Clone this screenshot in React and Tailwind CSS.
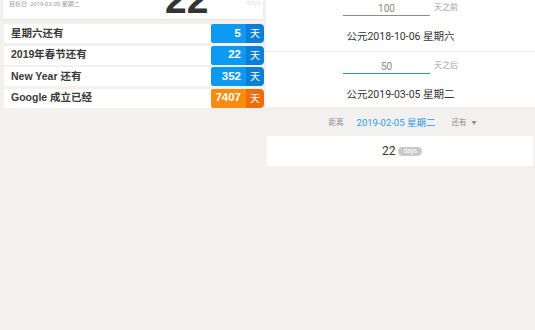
import React from "react";

const rows = [
  { label: "星期六还有", n: "5", orange: false },
  { label: "2019年春节还有", n: "22", orange: false },
  { label: "New Year 还有", n: "352", orange: false },
  { label: "Google 成立已经", n: "7407", orange: true },
];

function Badge({ n, orange }) {
  return (
    <div className="flex h-full overflow-hidden rounded-r-[4px] rounded-l-[2px]">
      <div
        className={
          "flex w-[35px] items-center justify-end pr-[5px] text-[11.5px] font-bold text-white " +
          (orange ? "bg-[#fb8b0e]" : "bg-[#0c9af0]")
        }
      >
        {n}
      </div>
      <div
        className={
          "flex w-[18px] items-center justify-center text-[10px] text-white " +
          (orange ? "bg-[#f36c0b]" : "bg-[#0b7fd8]")
        }
      >
        天
      </div>
    </div>
  );
}

function InputRow({ value, label, active }) {
  return (
    <div className="flex items-end justify-center gap-[4px]">
      <div
        className={
          "w-[87px] text-center text-[10px] leading-[13px] text-[#8a8a8a] border-b " +
          (active ? "border-[#2b8fe0]" : "border-[#8d8d8d]")
        }
      >
        {value}
      </div>
      <div className="w-[24px] pb-[3px] text-[8px] leading-[10px] text-[#a0a0a0]">{label}</div>
    </div>
  );
}

export default function App() {
  return (
    <div
      className="flex h-[330px] w-[535px] overflow-hidden bg-[#f2f1f0]"
      style={{ fontFamily: "Roboto, 'Noto Sans CJK SC', sans-serif" }}
    >
      <div className="flex w-[266px] flex-col">
        <div className="mx-[3px] flex h-[19px] overflow-hidden bg-white shadow-[0_1px_2px_rgba(0,0,0,0.06)]">
          <div className="w-[162px] pl-[6px] pt-[0px] text-[6px] leading-[7px] text-[#9a9a9a]">
            目标日: 2019-02-05 星期二
          </div>
          <div
            className="-mt-[15px] text-[39px] font-bold leading-[30px] text-[#333]"
            style={{ fontFamily: "'Liberation Sans', sans-serif" }}
          >
            22
          </div>
          <div className="ml-auto pr-[2px] text-[7px] leading-[6px] text-[#dde6ee]">days</div>
        </div>
        <div
          className="mt-[5px] flex flex-col gap-[2.5px] pl-[4px] pr-[2px]"
          style={{ fontFamily: "'Liberation Sans', 'Noto Sans CJK SC', sans-serif" }}
        >
          {rows.map((r) => (
            <div key={r.label} className="flex h-[19px] items-center bg-white">
              <div className="flex-1 pl-[7px] text-[10.5px] font-bold text-[#3a3a3a]">{r.label}</div>
              <div className="h-full">
                <Badge n={r.n} orange={r.orange} />
              </div>
            </div>
          ))}
        </div>
      </div>
      <div className="flex flex-1 flex-col">
        <div className="bg-white">
          <div className="flex h-[51px] flex-col pt-[2px]">
            <InputRow value="100" label="天之前" />
            <div className="mt-[14px] text-center text-[10.5px] leading-[14px] text-[#333]">
              公元2018-10-06 星期六
            </div>
          </div>
          <div className="border-t border-[#ececec]" />
          <div className="flex h-[55px] flex-col pt-[8px]">
            <InputRow value="50" label="天之后" active />
            <div className="mt-[14px] text-center text-[10.5px] leading-[14px] text-[#333]">
              公元2019-03-05 星期二
            </div>
          </div>
        </div>
        <div className="flex h-[29px] items-center justify-center pl-[4px] pt-[3px]">
          <span className="text-[7.5px] text-[#8c8c8c]">距离</span>
          <span className="ml-[13px] text-[9.5px] text-[#2d9aea]">2019-02-05 星期二</span>
          <span className="ml-[16px] text-[7.5px] text-[#8c8c8c]">还有</span>
          <span className="ml-[5px] text-[5px] text-[#8c8c8c]">▼</span>
        </div>
        <div className="mr-[2px] ml-[1px] flex h-[30px] items-center justify-center gap-[3px] bg-white pl-[4px]">
          <span className="text-[12px] text-[#333]">22</span>
          <span className="rounded-full bg-[#c9c9c9] px-[5px] text-[6.5px] leading-[9px] text-white">days</span>
        </div>
      </div>
    </div>
  );
}
